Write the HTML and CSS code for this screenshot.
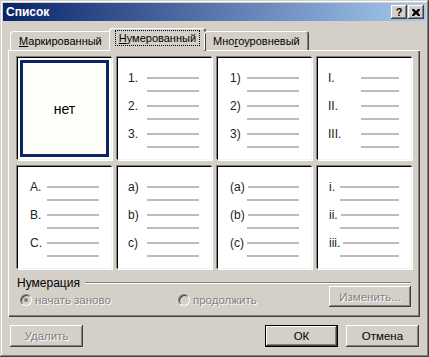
FILE: index.html
```html
<!DOCTYPE html>
<html lang="ru">
<head>
    <meta charset="UTF-8">
    <title>Список</title>
    <link rel="stylesheet" href="styles.css">
</head>
<body>
    <div class="window">
        <div class="titlebar">
            <span class="title">Список</span>
            <div class="tb-buttons">
                <span class="tb-btn help">?</span>
                <span class="tb-btn close">
                    <svg width="8" height="7" viewBox="0 0 8 7"><path d="M0 0h2l2 2 2-2h2v1l-2 2.5 2 2.5v1h-2l-2-2-2 2h-2v-1l2-2.5-2-2.5z" fill="#000"/></svg>
                </span>
            </div>
        </div>
        <div class="content">
            <div class="tabs">
                <div class="tab"><u>М</u>аркированный</div>
                <div class="tab active"><span class="focus"><u>Н</u>умерованный</span></div>
                <div class="tab">Мно<u>г</u>оуровневый</div>
            </div>
            <div class="panel">
                <div class="grid">
                    <div class="cell selected"><span class="none">нет</span></div>
                    <div class="cell">
                        <div class="item"><span class="num">1.</span><i class="ln"></i></div><i class="ln sub"></i>
                        <div class="item"><span class="num">2.</span><i class="ln"></i></div><i class="ln sub"></i>
                        <div class="item"><span class="num">3.</span><i class="ln"></i></div><i class="ln sub"></i>
                    </div>
                    <div class="cell shift">
                        <div class="item"><span class="num">1)</span><i class="ln"></i></div><i class="ln sub"></i>
                        <div class="item"><span class="num">2)</span><i class="ln"></i></div><i class="ln sub"></i>
                        <div class="item"><span class="num">3)</span><i class="ln"></i></div><i class="ln sub"></i>
                    </div>
                    <div class="cell roman">
                        <div class="item"><span class="num">I.</span><i class="ln"></i></div><i class="ln sub"></i>
                        <div class="item"><span class="num">II.</span><i class="ln"></i></div><i class="ln sub"></i>
                        <div class="item"><span class="num">III.</span><i class="ln"></i></div><i class="ln sub"></i>
                    </div>
                    <div class="cell shift">
                        <div class="item"><span class="num">A.</span><i class="ln"></i></div><i class="ln sub"></i>
                        <div class="item"><span class="num">B.</span><i class="ln"></i></div><i class="ln sub"></i>
                        <div class="item"><span class="num">C.</span><i class="ln"></i></div><i class="ln sub"></i>
                    </div>
                    <div class="cell">
                        <div class="item"><span class="num">a)</span><i class="ln"></i></div><i class="ln sub"></i>
                        <div class="item"><span class="num">b)</span><i class="ln"></i></div><i class="ln sub"></i>
                        <div class="item"><span class="num">c)</span><i class="ln"></i></div><i class="ln sub"></i>
                    </div>
                    <div class="cell shift">
                        <div class="item"><span class="num">(a)</span><i class="ln"></i></div><i class="ln sub"></i>
                        <div class="item"><span class="num">(b)</span><i class="ln"></i></div><i class="ln sub"></i>
                        <div class="item"><span class="num">(c)</span><i class="ln"></i></div><i class="ln sub"></i>
                    </div>
                    <div class="cell small">
                        <div class="item"><span class="num">i.</span><i class="ln"></i></div><i class="ln sub"></i>
                        <div class="item"><span class="num">ii.</span><i class="ln"></i></div><i class="ln sub"></i>
                        <div class="item"><span class="num">iii.</span><i class="ln"></i></div><i class="ln sub"></i>
                    </div>
                </div>
                <div class="group">
                    <div class="legend"><span>Нумерация</span><i class="groove"></i></div>
                    <div class="group-row">
                        <label class="radio first"><span class="circle checked"></span><span class="dis">начать заново</span></label>
                        <label class="radio"><span class="circle"></span><span class="dis">продолжить</span></label>
                        <button class="btn change" disabled><span class="dis">Изменить...</span></button>
                    </div>
                </div>
            </div>
            <div class="footer">
                <button class="btn" disabled><span class="dis">Удалить</span></button>
                <div class="right">
                    <button class="btn default">ОК</button>
                    <button class="btn">Отмена</button>
                </div>
            </div>
        </div>
    </div>
</body>
</html>
```

FILE: styles.css
```css
body {
    margin: 0;
    background: #d4d0c8;
}
.window {
    width: 429px;
    height: 357px;
    box-sizing: border-box;
    padding: 3px;
    background: #d4d0c8;
    font-family: "Liberation Sans", Arial, sans-serif;
    font-size: 11px;
    color: #000;
    box-shadow: inset -1px -1px #404040, inset 1px 1px #d4d0c8, inset -2px -2px #808080, inset 2px 2px #fff;
}
.titlebar {
    height: 18px;
    display: flex;
    align-items: center;
    justify-content: space-between;
    padding: 0 2px 0 3px;
    background: linear-gradient(90deg, #0a246a, #a6caf0);
}
.title {
    color: #fff;
    font-weight: bold;
    font-size: 12px;
}
.tb-buttons {
    display: flex;
    gap: 1px;
}
.tb-btn {
    width: 16px;
    height: 14px;
    box-sizing: border-box;
    display: flex;
    align-items: center;
    justify-content: center;
    background: #d4d0c8;
    font-weight: bold;
    font-size: 11px;
    box-shadow: inset -1px -1px #404040, inset 1px 1px #fff, inset -2px -2px #808080;
}
.content {
    padding: 7px 6px 0 5px;
}
.tabs {
    display: flex;
    align-items: flex-end;
    height: 22px;
    padding-left: 2px;
    position: relative;
    z-index: 1;
}
.tab {
    height: 19px;
    box-sizing: border-box;
    padding: 4px 9px 0 9px;
    border-radius: 3px 3px 0 0;
    box-shadow: inset 1px 1px #fff, inset -1px 0 #404040, inset -2px 0 #808080;
    white-space: nowrap;
}
.tab.active {
    height: 23px;
    margin: 0 -2px -1px -2px;
    padding: 4px 8px 0 8px;
    background: #d4d0c8;
}
.focus {
    outline: 1px dotted #000;
    outline-offset: 1px;
    padding: 0 2px;
}
.panel {
    height: 267px;
    box-sizing: border-box;
    padding: 7px 7px 0 9px;
    box-shadow: inset 1px 1px #fff, inset -1px -1px #404040, inset -2px -2px #808080;
}
.grid {
    display: grid;
    grid-template-columns: repeat(4, 95px);
    grid-template-rows: repeat(2, 103px);
    column-gap: 5px;
    row-gap: 6px;
}
.cell {
    --lead: 19px;
    background: #fff;
    box-sizing: border-box;
    padding: 13px 12px 0 10px;
    border: 1px solid;
    border-color: #000 #f4f4f4 #f4f4f4 #000;
    box-shadow: -1px -1px #808080, 1px 1px #fff;
    font-size: 12px;
}
.cell.shift {
    padding-left: 12px;
    --lead: 17px;
}
.cell.roman {
    --lead: 33px;
}
.cell.small {
    padding-left: 11px;
    --lead: 11px;
}
.cell.selected {
    background: #fffffa;
    display: flex;
    align-items: center;
    justify-content: center;
    padding: 0;
    box-shadow: -1px -1px #808080, 1px 1px #fff, inset 0 0 0 2px #fffffa, inset 0 0 0 5px #0a246a;
}
.none {
    font-size: 14px;
}
.item {
    display: flex;
    align-items: center;
    height: 14px;
    margin-top: 7px;
}
.item:first-child {
    margin-top: 0;
}
.num {
    min-width: var(--lead);
    box-sizing: border-box;
    padding-right: 3px;
    color: #222;
    flex-shrink: 0;
}
.ln {
    display: block;
    flex: 1;
    height: 2px;
    background: #bdbdbd;
}
.ln.sub {
    margin: 5px 0 0 var(--lead);
}
.group {
    margin-top: 8px;
}
.legend {
    display: flex;
    align-items: center;
    height: 12px;
    line-height: 12px;
    gap: 5px;
    font-size: 12px;
}
.groove {
    flex: 1;
    height: 0;
    border-top: 1px solid #808080;
    border-bottom: 1px solid #fff;
    margin-right: 2px;
}
.group-row {
    display: flex;
    align-items: flex-end;
    margin-top: -3px;
    padding-right: 2px;
    font-size: 11.5px;
}
.radio {
    display: flex;
    align-items: center;
    gap: 3px;
    margin-bottom: 1px;
}
.radio.first {
    margin-left: 3px;
    width: 158px;
}
.circle {
    width: 12px;
    height: 12px;
    box-sizing: border-box;
    border-radius: 50%;
    background: #d4d0c8;
    border: 1px solid;
    border-color: #808080 #fff #fff #808080;
    box-shadow: inset 1px 1px #404040;
    display: flex;
    align-items: center;
    justify-content: center;
}
.circle.checked::after {
    content: "";
    width: 4px;
    height: 4px;
    border-radius: 50%;
    background: #808080;
}
.dis {
    color: #808080;
    text-shadow: 1px 1px #fff;
}
.btn {
    width: 73px;
    height: 22px;
    border: none;
    padding: 0;
    background: #d4d0c8;
    font-family: "Liberation Sans", Arial, sans-serif;
    font-size: 11.5px;
    color: #000;
    box-shadow: inset -1px -1px #404040, inset 1px 1px #fff, inset -2px -2px #808080, inset 2px 2px #d4d0c8;
}
.btn.change {
    margin-left: auto;
    width: 82px;
    height: 21px;
}
.btn.default {
    border: 1px solid #000;
}
.footer {
    display: flex;
    justify-content: space-between;
    margin-top: 8px;
    padding: 0 1px 0 2px;
}
.right {
    display: flex;
    gap: 8px;
}
```
